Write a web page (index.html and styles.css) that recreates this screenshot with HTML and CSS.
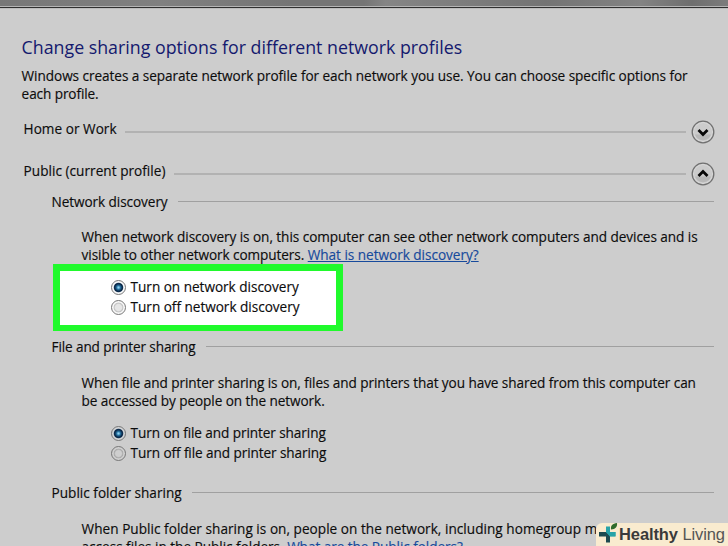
FILE: index.html
```html
<!DOCTYPE html>
<html lang="en">
<head>
<meta charset="utf-8">
<title>Advanced sharing settings</title>
<link rel="stylesheet" href="styles.css">
</head>
<body>
<div class="window">
  <div class="frame"></div>
  <main class="content">
    <h1 class="title">Change sharing options for different network profiles</h1>
    <p class="intro">Windows creates a separate network profile for each network you use. You can choose specific options for<br><span class="s10">each profile.</span></p>

    <div class="profile home">
      <span class="s-wide">Home or Work</span><i class="rule"></i>
      <svg class="chevron" viewBox="0 0 24 24"><circle class="ring" cx="12" cy="12" r="10.800"/><circle class="disc" cx="12" cy="12" r="9"/><path class="shade" d="M4 14.500h16a8.500 8.500 0 0 1-16 0z"/><path class="arrow" d="M7.500 10l4.500 4.500 4.500-4.500"/></svg>
    </div>
    <div class="profile public">
      <span class="s-wide">Public (current profile)</span><i class="rule"></i>
      <svg class="chevron" viewBox="0 0 24 24"><circle class="ring" cx="12" cy="12" r="10.800"/><circle class="disc" cx="12" cy="12" r="9"/><path class="shade" d="M4 14.500h16a8.500 8.500 0 0 1-16 0z"/><path class="arrow" d="M7.500 14l4.500-4.500 4.500 4.500"/></svg>
    </div>

    <section class="network">
      <h2 class="heading"><span class="s08">Network discovery</span><i class="rule"></i></h2>
      <p class="text">When network discovery is on, this computer can see other network computers and devices and is<br><span class="s08">visible to other network computers. </span><a class="s02">What is network discovery?</a></p>
      <div class="options highlight">
        <label class="option"><i class="radio on"></i><span class="s02">Turn on network discovery</span></label>
        <label class="option"><i class="radio"></i><span class="s02">Turn off network discovery</span></label>
      </div>
    </section>

    <section class="files">
      <h2 class="heading"><span class="s13">File and printer sharing</span><i class="rule"></i></h2>
      <p class="text s08">When file and printer sharing is on, files and printers that you have shared from this computer can<br>be accessed by people on the network.</p>
      <div class="options">
        <label class="option"><i class="radio on"></i><span class="s09">Turn on file and printer sharing</span></label>
        <label class="option"><i class="radio"></i><span class="s09">Turn off file and printer sharing</span></label>
      </div>
    </section>

    <section class="folders">
      <h2 class="heading"><span class="s00">Public folder sharing</span><i class="rule"></i></h2>
      <p class="text"><span class="s-wide">When Public folder sharing is on, people on the network, including homegroup m</span><br><span class="s02">access files in the Public folders. </span><a>What are the Public folders?</a></p>
    </section>
  </main>
  <div class="badge">
    <svg class="logo" viewBox="0 0 20 22"><path class="teal" d="M7 4.500h4v5.500h5.500v4.500H7z"/><path class="dark" d="M0 10h7l4 4.500v6H7v-6H0z"/><path class="teal" d="M7 10h9.500v4.200H11z"/><path class="leaf" d="M12 7.500c-.5-4 1.500-6 6-6.500.6 3.500-1.500 6.500-6 6.500z"/></svg>
    <span class="brand"><b>Healthy</b> <span class="light">Living</span></span>
  </div>
</div>
</body>
</html>
```
FILE: styles.css
```css
* { box-sizing: border-box; }
body { margin: 0; }
.window {
  position: relative;
  width: 728px;
  height: 546px;
  overflow: hidden;
  background: #cdcdcd;
  color: #0c0c0c;
  font: 13.6px/18px "Open Sans", "Noto Sans", sans-serif;
  letter-spacing: -.055px;
  -webkit-text-stroke: .15px currentColor;
}
.frame {
  height: 9px;
  background:
    linear-gradient(#0000 6px, #b4b4b4 6px 7px, #303030 7px 8px, #bcbcbc 8px),
    linear-gradient(90deg, #777, #808080 22%, #757575 40%, #757575 50%, #858585 53%, #747474 75%, #838383 88%, #6e6e6e 95%, #7c7c7c);
}
.content { padding: 26px 14px 0 21.6px; }
.title, .heading, p { margin: 0; font-weight: 400; white-space: nowrap; }
.title {
  font-size: 17.8px;
  line-height: 24px;
  letter-spacing: 0;
  color: #14196e;
  -webkit-text-stroke: 0;
}
.intro { margin-top: 8px; }
.profile, .heading { display: flex; height: 18px; font-size: inherit; white-space: nowrap; }
.profile { margin-left: 2px; }
.home { margin-top: 17px; }
.public { margin-top: 24px; }
.rule { flex: 1; height: 1px; margin: 8px 0 0 10px; background: #a0a0a0; }
.profile .rule { height: 2px; margin: 11px 5px 0 8px; background: #b2b2b2; }
.chevron { width: 24px; height: 24px; margin-right: -1px; }
.ring { fill: #d6d6d6; stroke: #707070; stroke-width: 1.3; }
.disc { fill: #cbcbcb; }
.shade { fill: #b8b8b8; }
.arrow { fill: none; stroke: #080808; stroke-width: 2.8; }
.network { margin: 13px 0 0 30px; }
.text { margin: 17px 0 0 30px; }
a { color: #174a9c; text-decoration: underline; }
.options { display: grid; margin-left: 59.4px; padding-top: 14px; }
.option { display: flex; height: 20px; gap: 4.6px; }
.radio {
  width: 15px;
  height: 15px;
  margin-top: 2px;
  border: 1px solid #777;
  border-radius: 50%;
  background: radial-gradient(circle closest-side at 50% 50%, #cfcfcf 0 45%, #a8a8a8 68%, #cfcfcf 80%);
}
.highlight .radio { background: radial-gradient(circle closest-side, #e6e6e6 0 48%, #c2c2c2 68%, #f8f8f8 82%); }
.radio.on { background: radial-gradient(circle closest-side, #8fd0ee 0 8%, #2878a8 28%, #0c2b4c 55%, #0c2b4c 66%, #d2d4d6 80%); }
.highlight .radio.on { background: radial-gradient(circle closest-side, #8fd0ee 0 8%, #2878a8 28%, #0c2b4c 55%, #0c2b4c 66%, #f8f9fa 80%); }
.highlight {
  width: 290px;
  height: 67px;
  margin-left: 1.4px;
  padding: 7px 0 0 51px;
  align-content: start;
  border: 7px solid #20fa2c;
  border-bottom-width: 6px;
  background: #fff;
}
.files { margin: 7px 0 0 30px; }
.files .text { margin-top: 18px; }
.folders { margin: 20px 0 0 30px; }
.folders .text { margin-top: 18px; }
.s-wide { letter-spacing: .03px; }
.s00 { letter-spacing: 0; }
.s02 { letter-spacing: -.025px; }
.s08 { letter-spacing: -.08px; }
.s09 { letter-spacing: -.088px; }
.s10 { letter-spacing: -.1px; }
.s13 { letter-spacing: -.13px; }
.badge {
  position: absolute;
  right: 0;
  bottom: 0;
  display: flex;
  width: 132px;
  height: 23px;
  padding-left: 3px;
  border-radius: 6px 0 0 0;
  background: #f9ebcf;
  -webkit-text-stroke: 0;
}
.logo { width: 20px; height: 22px; margin-top: -1px; }
.brand { font: 16.5px/22px "Liberation Sans", sans-serif; color: #444; white-space: nowrap; letter-spacing: -.1px; }
.brand b { color: #3a3a3a; }
.teal { fill: #27a3a8; }
.dark { fill: #1d4a50; }
.leaf { fill: #2f6b2c; }
.light { color: #555; }
```
